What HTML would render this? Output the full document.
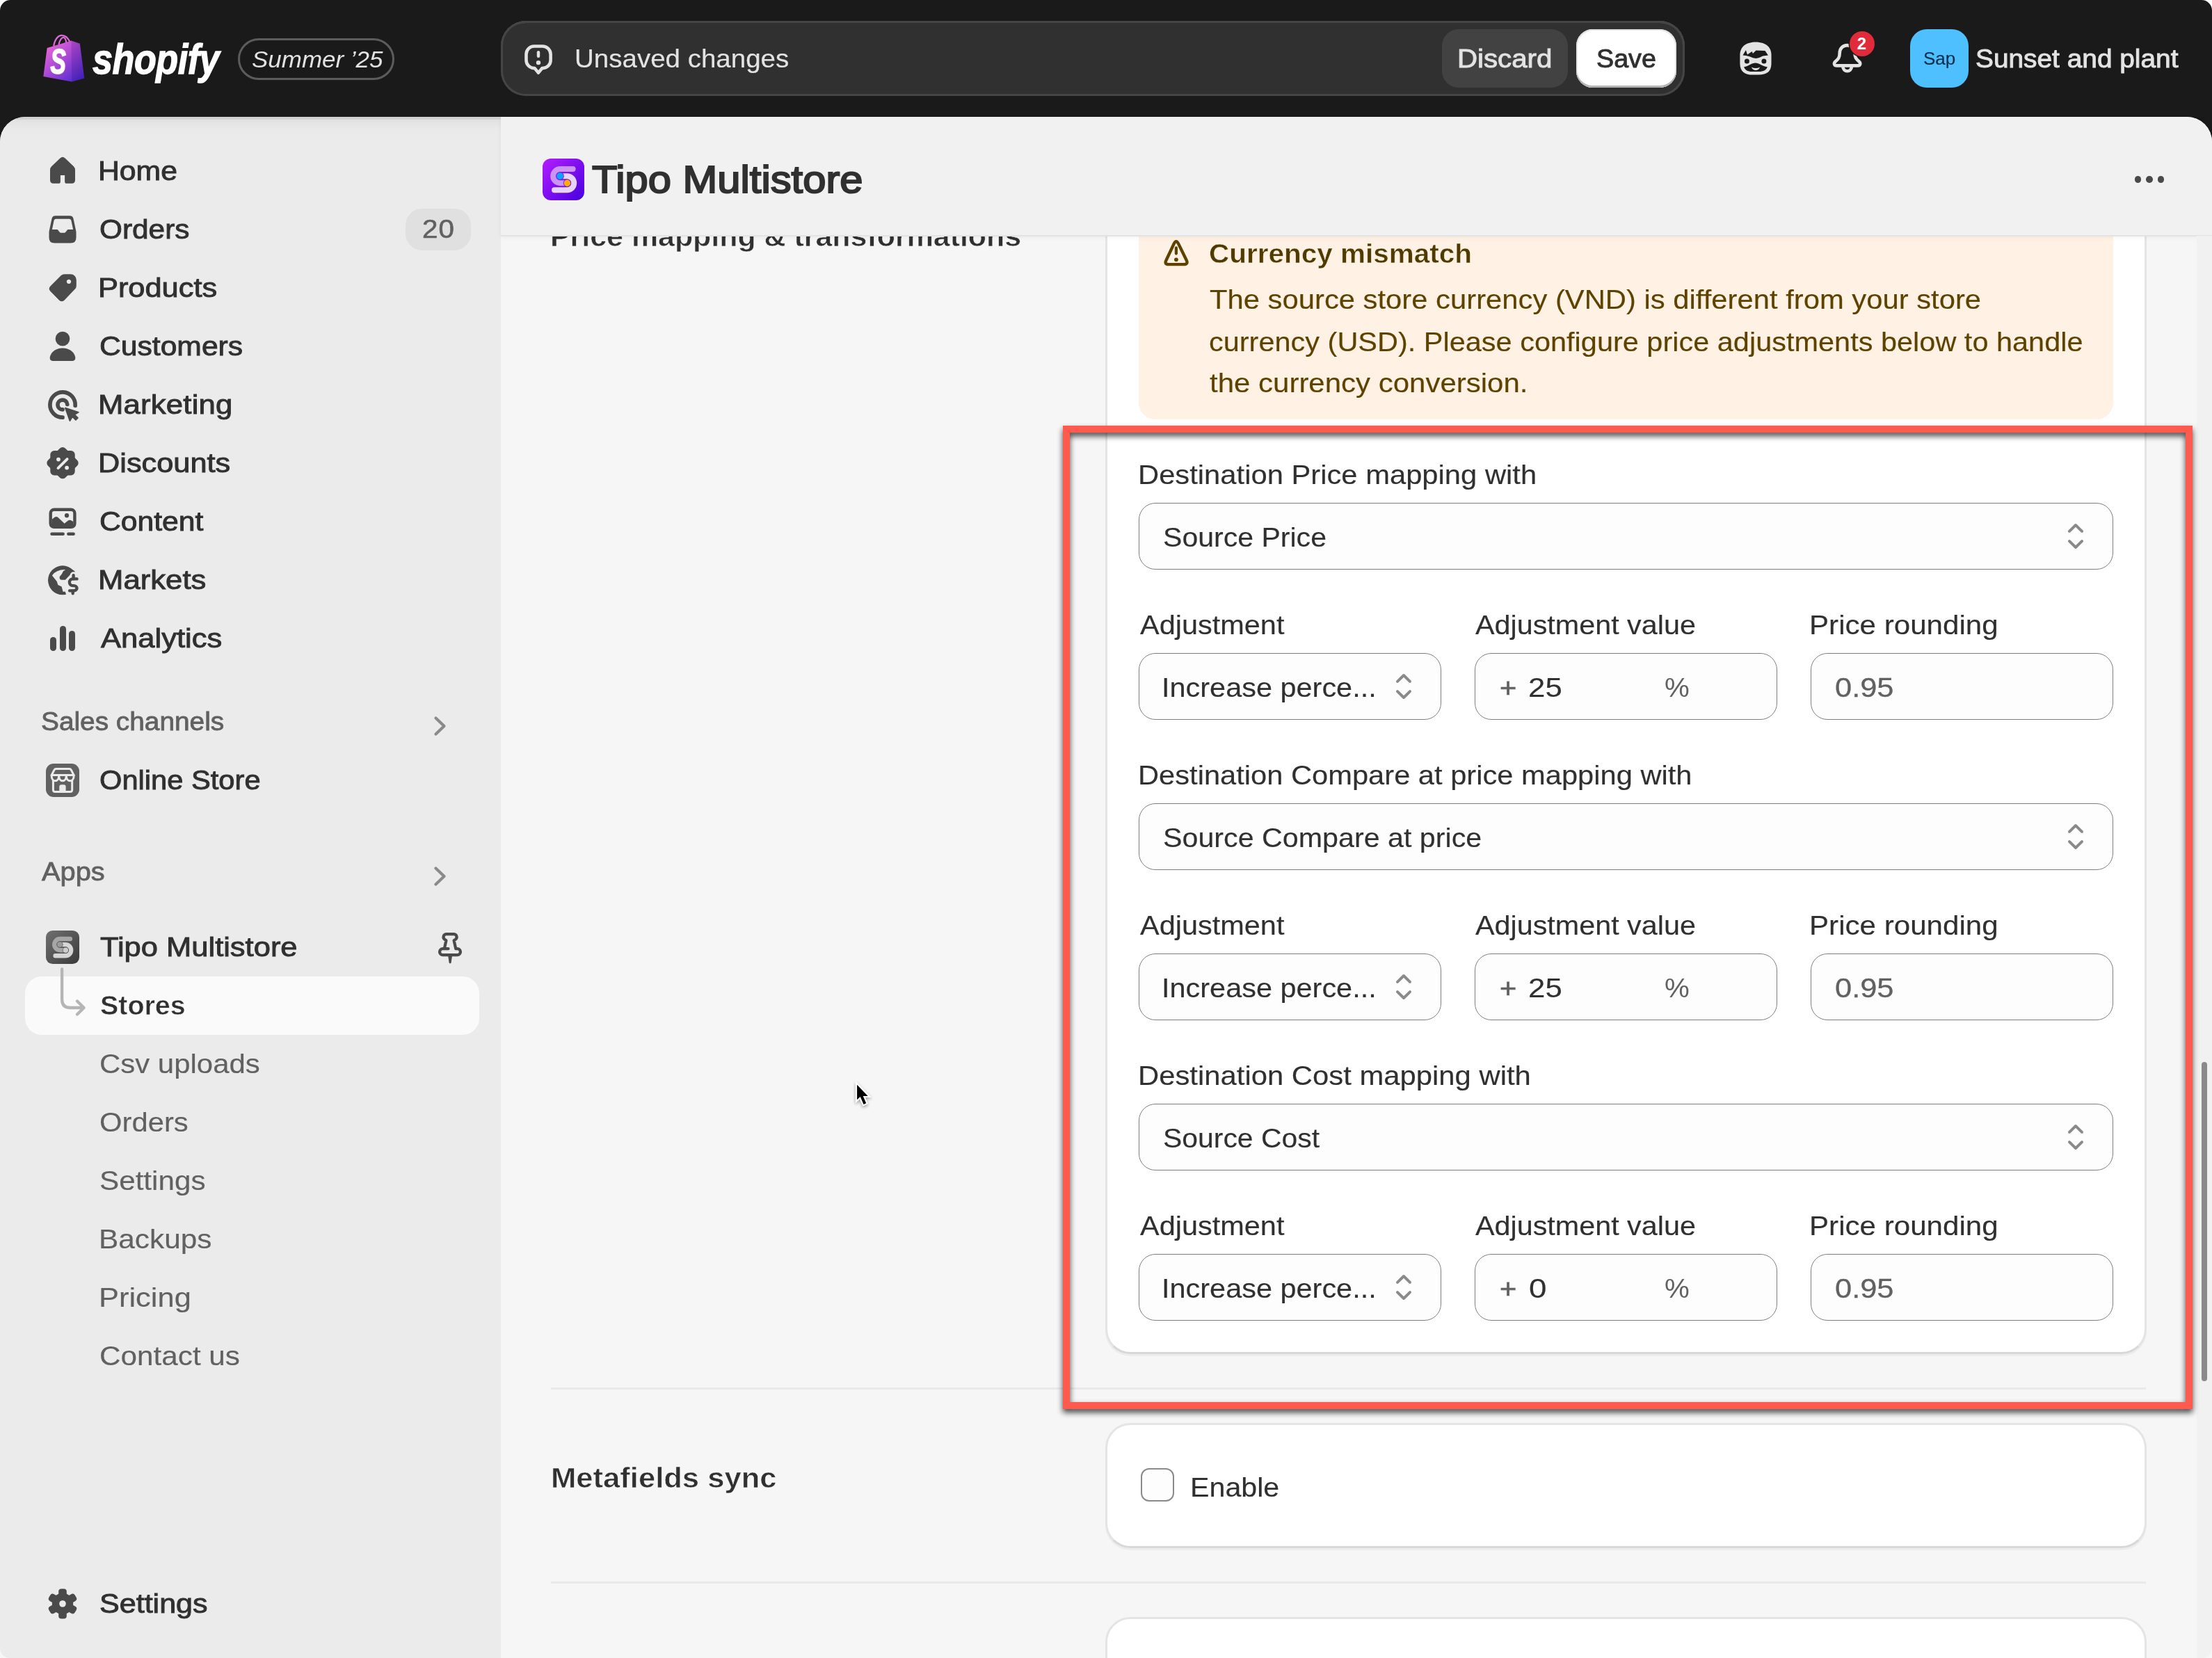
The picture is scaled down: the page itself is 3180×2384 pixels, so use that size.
<!DOCTYPE html>
<html><head><meta charset="utf-8"><title>Tipo Multistore</title>
<style>
html,body{margin:0;padding:0;}
body{width:3180px;height:2384px;position:relative;overflow:hidden;background:#fff;font-family:"Liberation Sans",sans-serif;}
.a{position:absolute;box-sizing:border-box;}
.t{position:absolute;white-space:pre;line-height:1;font-kerning:normal;transform-origin:0 50%;}
svg{position:absolute;overflow:visible;}
</style></head><body>
<div class="a" style="left:0px;top:0px;width:3180px;height:2384px;background:#1a1a1a;border-radius:15px 15px 0 0;"></div>
<div class="a" style="left:0px;top:168px;width:3180px;height:2216px;background:#f1f1f1;border-radius:36px 36px 0 0;overflow:hidden;"></div>
<div class="a" style="left:0px;top:168px;width:720px;height:2216px;background:#ebebeb;border-radius:36px 0 0 14px;"></div>
<div class="a" style="left:0px;top:168px;width:3180px;height:24px;border-radius:36px 36px 0 0;background:linear-gradient(to bottom, rgba(0,0,0,0.10) 0px, rgba(0,0,0,0.12) 3px, rgba(0,0,0,0.045) 4.5px, rgba(0,0,0,0.02) 12px, rgba(0,0,0,0) 22px);"></div>
<div class="a" style="left:36px;top:1404px;width:653px;height:84px;background:#fafafa;border-radius:24px;"></div>
<div class="a" style="left:342px;top:55px;width:225px;height:60px;border:3px solid #5c5c5c;border-radius:30px;"></div>
<div class="t" style="left:362.27px;top:69.07px;font-size:33px;color:#e3e3e3;letter-spacing:0.000px;transform:scaleX(1.0597);font-style:italic;">Summer ’25</div>
<div class="a" style="left:720px;top:30px;width:1702px;height:108px;background:#303030;border-radius:36px;box-shadow:inset 0 0 0 3px #454545, inset 0 3px 0 0 #5a5a5a;"></div>
<div class="t" style="left:826.28px;top:66.53px;font-size:36px;color:#e3e3e3;letter-spacing:0.000px;transform:scaleX(1.0695);-webkit-text-stroke:0.15px #e3e3e3;">Unsaved changes</div>
<div class="a" style="left:2073px;top:42px;width:181px;height:84px;background:#424242;border-radius:24px;"></div>
<div class="t" style="left:2094.98px;top:66.53px;font-size:36px;color:#e3e3e3;letter-spacing:0.000px;transform:scaleX(1.1174);-webkit-text-stroke:0.9px #e3e3e3;">Discard</div>
<div class="a" style="left:2266px;top:42px;width:144px;height:84px;background:#fff;border-radius:24px;box-shadow:inset 0 -3px 0 0 #b5b5b5, inset 0 0 0 2px #e3e3e3;"></div>
<div class="t" style="left:2294.53px;top:66.53px;font-size:36px;color:#303030;letter-spacing:0.000px;transform:scaleX(1.0472);-webkit-text-stroke:0.9px #303030;">Save</div>
<div class="a" style="left:2746px;top:42px;width:84px;height:84px;background:#4fc0ff;border-radius:24px;"></div>
<div class="t" style="left:2764.75px;top:71.84px;font-size:25px;color:#0a2d4a;letter-spacing:0.000px;transform:scaleX(1.0407);-webkit-text-stroke:0.15px #0a2d4a;">Sap</div>
<div class="t" style="left:2839.96px;top:66.53px;font-size:36px;color:#e3e3e3;letter-spacing:0.000px;transform:scaleX(1.0787);-webkit-text-stroke:0.9px #e3e3e3;">Sunset and plant</div>
<svg style="left:55px;top:45px;" width="80" height="80" viewBox="55 45 80 80">
<defs><linearGradient id="sg" x1="0.1" y1="0.05" x2="0.9" y2="0.95"><stop offset="0" stop-color="#ee6ad6"/><stop offset="0.5" stop-color="#a447d6"/><stop offset="1" stop-color="#4a28cc"/></linearGradient></defs>
<path d="M77.2 66 C79 56 84 50.5 89 50.8 C94 51 98 55 100.4 60" fill="none" stroke="#e06ad8" stroke-width="2.2"/>
<path d="M84.5 64 C86 57 89 53.5 91.5 54 C94 54.5 95 58 95.3 62" fill="none" stroke="#e06ad8" stroke-width="2.2"/>
<polygon points="67.7,68.9 102.5,58.4 114.8,62.8 121.3,112.4 103.2,117.5 62.3,110" fill="url(#sg)"/>
<polygon points="102.5,58.4 114.8,62.8 121.3,112.4 103.2,117.5" fill="rgba(40,0,90,0.16)"/>
<text x="72.2" y="105.6" font-family="Liberation Sans" font-weight="700" font-style="italic" font-size="49" fill="#fff" stroke="#fff" stroke-width="1.6" transform="translate(73.2 0) scale(0.68 1) translate(-73.2 0)">S</text>
</svg>
<div class="t" style="left:133.2px;top:53.5px;font-size:62px;font-weight:700;font-style:italic;color:#fff;letter-spacing:-0.6px;-webkit-text-stroke:1.4px #fff;transform:scaleX(0.842);transform-origin:0 0;">shopify</div>
<svg style="left:750px;top:60px;" width="50" height="50" viewBox="750 60 50 50"><path d="M768 66.5 H780 A11.6 11.6 0 0 1 791.6 78 V86.5 A11.6 11.6 0 0 1 780 98.1 L779.3 98.1 L774 104.6 L768.7 98.1 H768 A11.6 11.6 0 0 1 756.5 86.5 V78 A11.6 11.6 0 0 1 768 66.5 Z" fill="none" stroke="#e3e3e3" stroke-width="4.6" stroke-linejoin="round"/>
<path d="M774 75.2 V80.8" stroke="#e3e3e3" stroke-width="4.4" stroke-linecap="round"/><circle cx="774" cy="90.1" r="3.2" fill="#e3e3e3"/></svg>
<svg style="left:2495px;top:55px;" width="60" height="60" viewBox="2495 55 60 60"><path d="M2524 60.4 C2537 60.4 2546.5 66.5 2546.5 79 V91 C2546.5 103 2540 107.6 2528 107.6 H2520 C2508 107.6 2501.4 103 2501.4 91 V79 C2501.4 66.5 2511 60.4 2524 60.4 Z" fill="#e3e3e3"/>
<polygon points="2505.5,79.4 2509.9,72.1 2512.0,78.5 2518.8,73.9 2519.9,76.9 2524.5,72.6 2537.5,73.1 2541.9,79.4 2534.3,80.6 2528.9,82.9 2524.5,84.0 2520.2,83.2 2515.3,81.3 2510.4,79.9" fill="#1a1a1a"/>
<circle cx="2511.4" cy="87.9" r="3.5" fill="#1a1a1a"/><circle cx="2535.9" cy="87.9" r="3.5" fill="#1a1a1a"/>
<path d="M2507.1 96.2 C2514 95.5 2518 90.6 2523.6 90.6 C2529 90.6 2533 95.5 2540.8 96.2 C2538 103.5 2531 103 2523.6 103 C2516 103 2510 103.5 2507.1 96.2 Z" fill="#1a1a1a"/>
<path d="M2517.8 96.4 Q2524 99.5 2530.2 96.4 Q2528 101 2524 101 Q2520 101 2517.8 96.4 Z" fill="#e3e3e3"/></svg>
<svg style="left:2630px;top:40px;" width="70" height="70" viewBox="2630 40 70 70"><path d="M2655.6 65.1 C2649 65.1 2644.7 70 2644.7 76.5 C2644.7 83 2642.5 85 2638.8 88.3 C2635.5 91.2 2637 94.4 2640.5 94.4 H2670.7 C2674.2 94.4 2675.7 91.2 2672.4 88.3 C2668.7 85 2666.5 83 2666.5 76.5 C2666.5 70 2662.2 65.1 2655.6 65.1 Z" fill="none" stroke="#e3e3e3" stroke-width="4.6" stroke-linejoin="round"/>
<path d="M2649.3 96 A6.4 7.2 0 0 0 2662 96" fill="none" stroke="#e3e3e3" stroke-width="4.6"/>
<circle cx="2677" cy="63" r="19.5" fill="#1a1a1a"/><circle cx="2677" cy="63" r="18" fill="#e22b3a"/></svg>
<div class="t" style="left:2669.75px;top:50.68px;font-size:24px;color:#fff;letter-spacing:0.000px;font-weight:700;">2</div>
<svg style="left:60px;top:215px;" width="60" height="60" viewBox="0 0 20 20"><path fill="#4a4a4a" d="M8.9 4.1 Q10 3.1 11.1 4.1 L15.3 8.1 Q16 8.8 16 9.8 V14.6 Q16 16.27 14.4 16.27 H12 Q11.04 16.27 11.04 15.3 V12.3 H8.97 V15.3 Q8.97 16.27 8 16.27 H5.6 Q4 16.27 4 14.6 V9.8 Q4 8.8 4.7 8.1 Z"/></svg>
<svg style="left:60px;top:300px;" width="60" height="60" viewBox="0 0 20 20"><path fill="#4a4a4a" fill-rule="evenodd" d="M6.6 3.43 H13.4 Q14.9 3.43 15.2 4.9 L16.4 10.6 Q16.5 11 16.5 11.5 V13.9 Q16.5 16.47 13.9 16.47 H6.1 Q3.5 16.47 3.5 13.9 V11.5 Q3.5 11 3.6 10.6 L4.8 4.9 Q5.1 3.43 6.6 3.43 Z M6.9 4.9 Q6 4.9 5.83 5.8 L4.96 10.03 H7.3 Q7.7 10.03 7.9 10.4 L8.5 11.2 Q8.8 11.6 9.2 11.6 H10.8 Q11.2 11.6 11.5 11.2 L12.1 10.4 Q12.3 10.03 12.7 10.03 H15.04 L14.17 5.8 Q14 4.9 13.1 4.9 Z"/></svg>
<svg style="left:60px;top:384px;" width="60" height="60" viewBox="0 0 20 20"><path fill="#4a4a4a" fill-rule="evenodd" d="M10.9 3.43 H13.9 A2.7 2.7 0 0 1 16.6 6.13 V8.9 Q16.6 9.9 15.9 10.6 L10.9 15.8 Q9.6 17.1 8.3 15.8 L4.2 11.7 Q2.9 10.4 4.2 9.1 L9.2 4.1 Q9.9 3.43 10.9 3.43 Z M13 5.9 a1.07 1.07 0 1 0 0.001 0 Z"/></svg>
<svg style="left:60px;top:468px;" width="60" height="60" viewBox="0 0 20 20"><circle cx="10" cy="6.37" r="3.45" fill="#4a4a4a"/><path fill="#4a4a4a" d="M3.9 15.6 C3.9 13.5 6.3 10.86 10 10.86 C13.7 10.86 16.1 13.5 16.1 15.6 Q16.1 16.97 14.8 16.97 H5.2 Q3.9 16.97 3.9 15.6 Z"/></svg>
<svg style="left:60px;top:551.5px;" width="60" height="60" viewBox="0 0 20 20"><path d="M16.05 10.4 A6.05 6.05 0 1 0 10 16.05" fill="none" stroke="#4a4a4a" stroke-width="1.9" stroke-linecap="round"/><path d="M12.25 9.8 A2.3 2.3 0 1 0 10 12.3" fill="none" stroke="#4a4a4a" stroke-width="1.9" stroke-linecap="round"/><path d="M11.3 11.5 L17.6 13.6 L15.7 14.7 L17.3 16.3 L16.3 17.3 L14.7 15.7 L13.5 17.7 Z" fill="#4a4a4a" stroke="#4a4a4a" stroke-width="0.6" stroke-linejoin="round"/></svg>
<svg style="left:60px;top:636px;" width="60" height="60" viewBox="0 0 20 20"><g fill="#4a4a4a"><rect x="4.1" y="4.0" width="11.8" height="11.8" rx="1.9"/><rect x="4.1" y="4.0" width="11.8" height="11.8" rx="1.9" transform="rotate(45 10 9.9)"/></g><circle cx="8" cy="8.2" r="0.97" fill="#ebebeb"/><circle cx="12.03" cy="12.2" r="0.97" fill="#ebebeb"/><path d="M7.85 12.35 L12.2 8.05" stroke="#ebebeb" stroke-width="1.3" stroke-linecap="round"/></svg>
<svg style="left:60px;top:719.5px;" width="60" height="60" viewBox="0 0 20 20"><rect x="4.23" y="4.27" width="11.57" height="8.35" rx="1.7" fill="none" stroke="#4a4a4a" stroke-width="1.46"/><path fill="#4a4a4a" d="M4.9 8.9 L6.2 7.9 Q7.1 7.3 7.9 8.1 L10.9 10.9 L12.5 9.6 Q13.4 9 14.2 9.5 L15.1 10 V12.7 H4.9 Z"/><circle cx="12" cy="7.07" r="1.03" fill="#4a4a4a"/><path d="M4.85 15.9 H10.2 M12.8 15.9 H15.2" stroke="#4a4a4a" stroke-width="1.55" stroke-linecap="round"/></svg>
<svg style="left:60px;top:803.5px;" width="60" height="60" viewBox="0 0 20 20"><circle cx="10" cy="10.1" r="7" fill="#4a4a4a"/>
<path fill="#ebebeb" d="M4.96 7.86 Q7 4.8 11.78 5.03 L14.5 5.6 L17.5 9 V17.5 H11.78 L11.3 15.58 H10.17 L10 14.93 L9.53 13.17 L7.76 12.36 L7.28 10.75 L6.31 9.47 Z"/>
<path fill="#4a4a4a" stroke="#4a4a4a" stroke-width="0.5" stroke-linejoin="round" d="M11.78 5.03 L10.5 5.93 L9.85 7.22 L8.82 8.5 Q8.6 9.63 9.6 9.63 H11.2 L13.4 7.3 L15.6 5.9 L13 4.6 Z"/>
<g fill="none" stroke="#ebebeb" stroke-width="3.3" stroke-linecap="round"><path d="M16.85 9.47 H14.85 a1.55 1.62 0 0 0 0 3.24 h0.45 a1.55 1.2 0 0 1 0 2.4 H13.35"/><path d="M15.2 7.75 V16.45"/></g>
<g fill="none" stroke="#4a4a4a" stroke-width="1.45" stroke-linecap="round"><path d="M16.85 9.47 H14.85 a1.55 1.62 0 0 0 0 3.24 h0.45 a1.55 1.2 0 0 1 0 2.4 H13.35"/><path d="M15.2 7.75 V9.4 M14.9 15.2 V16.45"/></g></svg>
<div class="a" style="left:72px;top:916px;width:9px;height:20.200000000000045px;background:#4a4a4a;border-radius:4.5px;"></div>
<div class="a" style="left:85.5px;top:899.6px;width:9px;height:36.60000000000002px;background:#4a4a4a;border-radius:4.5px;"></div>
<div class="a" style="left:99px;top:907.2px;width:9px;height:29.0px;background:#4a4a4a;border-radius:4.5px;"></div>
<svg style="left:615px;top:1024px;" width="40" height="40" viewBox="615 1024 40 40"><path d="M626.5 1032.5 L638.5 1044 L626.5 1055.5" fill="none" stroke="#8a8a8a" stroke-width="4.2" stroke-linecap="round" stroke-linejoin="round"/></svg>
<svg style="left:615px;top:1239.7px;" width="40" height="40" viewBox="615 1239.7 40 40"><path d="M626.5 1248.2 L638.5 1259.7 L626.5 1271.2" fill="none" stroke="#8a8a8a" stroke-width="4.2" stroke-linecap="round" stroke-linejoin="round"/></svg>
<svg style="left:66px;top:1098px;" width="48" height="48" viewBox="0 0 48 48"><rect width="48" height="48" rx="11" fill="#616161"/>
<g fill="none" stroke="#ebebeb" stroke-width="3" stroke-linejoin="round" stroke-linecap="round">
<path d="M14.6 7.5 H33.7 Q35.5 7.5 36.3 9.1 L40.2 16.6 H8.1 L12 9.1 Q12.8 7.5 14.6 7.5 Z"/>
<path d="M8.1 16.7 C8.1 27.5 18.7 27.5 18.7 16.7 C18.7 27.5 29.3 27.5 29.3 16.7 C29.3 27.5 40.2 27.5 40.2 16.7"/>
<path d="M10.4 24.5 V37.6 Q10.4 40.6 13.4 40.6 H34.7 Q37.7 40.6 37.7 37.6 V24.5"/>
</g><path d="M19.3 40.6 V33.3 a3 3 0 0 1 3 -3 h3.3 a3 3 0 0 1 3 3 V40.6 Z" fill="#ebebeb"/></svg>
<svg style="left:66px;top:1338px;" width="48" height="48" viewBox="0 0 60 60"><defs><linearGradient id="tg1" x1="0" y1="0" x2="1" y2="1"><stop offset="0" stop-color="#707070"/><stop offset="1" stop-color="#3a3a3a"/></linearGradient></defs>
<rect width="60" height="60" rx="12" fill="url(#tg1)"/>
<path d="M43.6 15.05 H25.3 A10.1 10.1 0 0 0 25.3 35.25 H35.4" fill="none" stroke="#a6a6a6" stroke-width="8" stroke-linecap="round"/>
<path d="M25.2 25.15 H35.1 A10.1 10.1 0 0 1 35.1 45.35 H17" fill="none" stroke="#d6d6d6" stroke-width="8" stroke-linecap="round"/>
<circle cx="25.1" cy="25.15" r="5.7" fill="#5a5a5a"/><circle cx="25.1" cy="25.15" r="4.8" fill="#9c9c9c"/>
<circle cx="35.4" cy="35.3" r="5.6" fill="#5a5a5a"/><circle cx="35.4" cy="35.3" r="4.7" fill="#cdcdcd"/></svg>
<svg style="left:80px;top:1385px;" width="50" height="80" viewBox="80 1385 50 80"><path d="M89.1 1393.5 V1437.3 Q89.1 1449 101 1449 H120 M111 1439.5 L120.6 1449 L111 1458.5" fill="none" stroke="#b5b5b5" stroke-width="4.3" stroke-linecap="round" stroke-linejoin="round"/></svg>
<svg style="left:620px;top:1330px;" width="60" height="60" viewBox="620 1330 60 60"><path d="M641.5 1343.1 H652.6 A4.3 4.3 0 0 1 654.6 1351 L652.6 1352.3 L655.3 1364.2 H657.5 A4.45 4.45 0 0 1 657.5 1373.1 H636.5 A4.45 4.45 0 0 1 636.5 1364.2 H644.5 M638.8 1364.2 L641.4 1352.3 L639.5 1351 A4.3 4.3 0 0 1 641.5 1343.1" fill="none" stroke="#4a4a4a" stroke-width="4.2" stroke-linecap="round" stroke-linejoin="round"/>
<path d="M644 1373 H650.2 L648.6 1384.3 Q647.1 1386.6 645.6 1384.3 Z" fill="#4a4a4a"/></svg>
<svg style="left:60px;top:2276px;" width="60" height="60" viewBox="-30 -30 60 60"><g fill="#4a4a4a"><circle r="15.2"/><rect x="-5.8" y="-21.6" width="11.6" height="43.2" rx="4"/><rect x="-5.8" y="-21.6" width="11.6" height="43.2" rx="4" transform="rotate(60)"/><rect x="-5.8" y="-21.6" width="11.6" height="43.2" rx="4" transform="rotate(120)"/></g><circle r="4.8" fill="#ebebeb"/></svg>
<div class="t" style="left:141.28px;top:226.49px;font-size:39px;color:#303030;letter-spacing:0.000px;transform:scaleX(1.0952);-webkit-text-stroke:0.9px #303030;">Home</div>
<div class="t" style="left:142.81px;top:310.49px;font-size:39px;color:#303030;letter-spacing:0.000px;transform:scaleX(1.0859);-webkit-text-stroke:0.9px #303030;">Orders</div>
<div class="t" style="left:141.22px;top:394.49px;font-size:39px;color:#303030;letter-spacing:0.000px;transform:scaleX(1.1120);-webkit-text-stroke:0.9px #303030;">Products</div>
<div class="t" style="left:142.66px;top:478.49px;font-size:39px;color:#303030;letter-spacing:-0.000px;transform:scaleX(1.0931);-webkit-text-stroke:0.9px #303030;">Customers</div>
<div class="t" style="left:141.20px;top:562.49px;font-size:39px;color:#303030;letter-spacing:0.179px;transform:scaleX(1.1200);-webkit-text-stroke:0.9px #303030;">Marketing</div>
<div class="t" style="left:141.23px;top:646.49px;font-size:39px;color:#303030;letter-spacing:0.000px;transform:scaleX(1.1112);-webkit-text-stroke:0.9px #303030;">Discounts</div>
<div class="t" style="left:142.66px;top:730.49px;font-size:39px;color:#303030;letter-spacing:0.000px;transform:scaleX(1.0937);-webkit-text-stroke:0.9px #303030;">Content</div>
<div class="t" style="left:141.20px;top:814.49px;font-size:39px;color:#303030;letter-spacing:0.006px;transform:scaleX(1.1200);-webkit-text-stroke:0.9px #303030;">Markets</div>
<div class="t" style="left:144.70px;top:898.49px;font-size:39px;color:#303030;letter-spacing:0.000px;transform:scaleX(1.1162);-webkit-text-stroke:0.9px #303030;">Analytics</div>
<div class="t" style="left:142.85px;top:1102.49px;font-size:39px;color:#303030;letter-spacing:0.000px;transform:scaleX(1.0681);-webkit-text-stroke:0.9px #303030;">Online Store</div>
<div class="t" style="left:143.72px;top:1341.99px;font-size:39px;color:#303030;letter-spacing:0.000px;transform:scaleX(1.1150);-webkit-text-stroke:0.9px #303030;">Tipo Multistore</div>
<div class="t" style="left:142.77px;top:2286.49px;font-size:39px;color:#303030;letter-spacing:0.000px;transform:scaleX(1.1042);-webkit-text-stroke:0.9px #303030;">Settings</div>
<div class="a" style="left:583px;top:300px;width:94px;height:60px;background:#e0e0e0;border-radius:24px;"></div>
<div class="t" style="left:606.90px;top:312.43px;font-size:36px;color:#616161;letter-spacing:1.071px;transform:scaleX(1.1200);-webkit-text-stroke:0.6px #616161;">20</div>
<div class="t" style="left:58.72px;top:1020.23px;font-size:36px;color:#616161;letter-spacing:0.000px;transform:scaleX(1.0781);-webkit-text-stroke:0.8px #616161;">Sales channels</div>
<div class="t" style="left:60.46px;top:1236.23px;font-size:36px;color:#616161;letter-spacing:0.000px;transform:scaleX(1.1046);-webkit-text-stroke:0.8px #616161;">Apps</div>
<div class="t" style="left:143.81px;top:1425.99px;font-size:39px;color:#303030;letter-spacing:0.000px;transform:scaleX(1.0106);font-weight:700;-webkit-text-stroke:0.5px #fafafa;">Stores</div>
<div class="t" style="left:143.10px;top:1510.49px;font-size:39px;color:#616161;letter-spacing:0.000px;transform:scaleX(1.0753);-webkit-text-stroke:0.15px #616161;">Csv uploads</div>
<div class="t" style="left:143.24px;top:1594.49px;font-size:39px;color:#616161;letter-spacing:0.000px;transform:scaleX(1.0713);-webkit-text-stroke:0.15px #616161;">Orders</div>
<div class="t" style="left:143.22px;top:1678.49px;font-size:39px;color:#616161;letter-spacing:0.000px;transform:scaleX(1.0824);-webkit-text-stroke:0.15px #616161;">Settings</div>
<div class="t" style="left:141.72px;top:1762.49px;font-size:39px;color:#616161;letter-spacing:0.000px;transform:scaleX(1.0860);-webkit-text-stroke:0.15px #616161;">Backups</div>
<div class="t" style="left:141.63px;top:1846.49px;font-size:39px;color:#616161;letter-spacing:0.000px;transform:scaleX(1.1142);-webkit-text-stroke:0.15px #616161;">Pricing</div>
<div class="t" style="left:143.09px;top:1930.49px;font-size:39px;color:#616161;letter-spacing:0.000px;transform:scaleX(1.0834);-webkit-text-stroke:0.15px #616161;">Contact us</div>
<div class="a" style="left:720px;top:338px;width:2460px;height:2046px;background:#f6f6f6;"></div>
<div class="t" style="left:791.14px;top:320.29px;font-size:41px;color:#303030;letter-spacing:0.000px;transform:scaleX(1.0466);font-weight:700;-webkit-text-stroke:0.6px #f6f6f6;">Price mapping &amp; transformations</div>
<div class="a" style="left:1589px;top:300px;width:1497px;height:1647px;background:#fff;border:3px solid #e4e4e4;border-bottom-color:#d8d8d8;border-radius:36px;box-shadow:0 3px 0 0 #ececec;"></div>
<div class="a" style="left:1637px;top:300px;width:1401px;height:302.5px;background:#fff1e3;border-radius:24px;"></div>
<svg style="left:1665px;top:338px;" width="52" height="50" viewBox="1665 338 52 50"><path d="M1676.6 374 L1687.6 350.6 Q1690.9 343.6 1694.2 350.6 L1705.6 374 Q1708.6 380.1 1701.8 380.1 H1680.2 Q1673.4 380.1 1676.6 374 Z" fill="none" stroke="#5e4200" stroke-width="4.4" stroke-linejoin="round"/><path d="M1690.9 356.4 V364.6" stroke="#5e4200" stroke-width="4.2" stroke-linecap="round"/><circle cx="1690.9" cy="373.3" r="2.9" fill="#5e4200"/></svg>
<div class="t" style="left:1737.88px;top:344.99px;font-size:39px;color:#4f3a00;letter-spacing:0.000px;transform:scaleX(1.0381);font-weight:700;-webkit-text-stroke:0.5px #fff1e3;">Currency mismatch</div>
<div class="t" style="left:1738.68px;top:411.29px;font-size:39px;color:#5e4200;letter-spacing:0.000px;transform:scaleX(1.0713);-webkit-text-stroke:0.15px #5e4200;">The source store currency (VND) is different from your store</div>
<div class="t" style="left:1737.89px;top:471.99px;font-size:39px;color:#5e4200;letter-spacing:0.000px;transform:scaleX(1.0636);-webkit-text-stroke:0.15px #5e4200;">currency (USD). Please configure price adjustments below to handle</div>
<div class="t" style="left:1739.08px;top:531.29px;font-size:39px;color:#5e4200;letter-spacing:0.000px;transform:scaleX(1.0768);-webkit-text-stroke:0.15px #5e4200;">the currency conversion.</div>
<div class="t" style="left:1635.97px;top:662.99px;font-size:39px;color:#303030;letter-spacing:0.000px;transform:scaleX(1.0704);-webkit-text-stroke:0.15px #303030;">Destination Price mapping with</div>
<div class="a" style="left:1637px;top:723px;width:1401px;height:96px;background:#fdfdfd;border:1px solid #7f7f7f;border-radius:24px;"></div>
<div class="t" style="left:1671.78px;top:752.99px;font-size:39px;color:#303030;letter-spacing:0.000px;transform:scaleX(1.0524);-webkit-text-stroke:0.15px #303030;">Source Price</div>
<svg style="left:2968.5px;top:750px" width="30" height="42" viewBox="0 0 30 42"><path d="M6 13.9 L15 5 L24 13.9 M6 28.1 L15 37 L24 28.1" fill="none" stroke="#8a8a8a" stroke-width="4" stroke-linecap="round" stroke-linejoin="round"/></svg>
<div class="t" style="left:1638.62px;top:878.99px;font-size:39px;color:#303030;letter-spacing:0.000px;transform:scaleX(1.0632);-webkit-text-stroke:0.15px #303030;">Adjustment</div>
<div class="t" style="left:2120.82px;top:878.99px;font-size:39px;color:#303030;letter-spacing:0.000px;transform:scaleX(1.0592);-webkit-text-stroke:0.15px #303030;">Adjustment value</div>
<div class="t" style="left:2600.54px;top:878.99px;font-size:39px;color:#303030;letter-spacing:-0.000px;transform:scaleX(1.0802);-webkit-text-stroke:0.15px #303030;">Price rounding</div>
<div class="a" style="left:1637px;top:939px;width:435px;height:96px;background:#fdfdfd;border:1px solid #7f7f7f;border-radius:24px;"></div>
<div class="a" style="left:2120px;top:939px;width:435px;height:96px;background:#fdfdfd;border:1px solid #7f7f7f;border-radius:24px;"></div>
<div class="a" style="left:2603px;top:939px;width:435px;height:96px;background:#fdfdfd;border:1px solid #7f7f7f;border-radius:24px;"></div>
<div class="t" style="left:1669.90px;top:968.99px;font-size:39px;color:#303030;letter-spacing:0.000px;transform:scaleX(1.0628);-webkit-text-stroke:0.15px #303030;">Increase perce...</div>
<svg style="left:2002.8px;top:966px" width="30" height="42" viewBox="0 0 30 42"><path d="M6 13.9 L15 5 L24 13.9 M6 28.1 L15 37 L24 28.1" fill="none" stroke="#8a8a8a" stroke-width="4" stroke-linecap="round" stroke-linejoin="round"/></svg>
<div class="t" style="left:2155.93px;top:968.99px;font-size:39px;color:#616161;letter-spacing:0.000px;transform:scaleX(1.0632);-webkit-text-stroke:0.7px #616161;">+</div>
<div class="t" style="left:2197.02px;top:968.99px;font-size:39px;color:#303030;letter-spacing:0.268px;transform:scaleX(1.1200);-webkit-text-stroke:0.15px #303030;">25</div>
<div class="t" style="left:2392.58px;top:968.99px;font-size:39px;color:#616161;letter-spacing:0.000px;transform:scaleX(1.0312);">%</div>
<div class="t" style="left:2637.86px;top:968.99px;font-size:39px;color:#616161;letter-spacing:0.000px;transform:scaleX(1.1129);-webkit-text-stroke:0.3px #616161;">0.95</div>
<div class="t" style="left:1635.98px;top:1094.99px;font-size:39px;color:#303030;letter-spacing:0.000px;transform:scaleX(1.0681);-webkit-text-stroke:0.15px #303030;">Destination Compare at price mapping with</div>
<div class="a" style="left:1637px;top:1155px;width:1401px;height:96px;background:#fdfdfd;border:1px solid #7f7f7f;border-radius:24px;"></div>
<div class="t" style="left:1671.77px;top:1184.99px;font-size:39px;color:#303030;letter-spacing:0.000px;transform:scaleX(1.0569);-webkit-text-stroke:0.15px #303030;">Source Compare at price</div>
<svg style="left:2968.5px;top:1182px" width="30" height="42" viewBox="0 0 30 42"><path d="M6 13.9 L15 5 L24 13.9 M6 28.1 L15 37 L24 28.1" fill="none" stroke="#8a8a8a" stroke-width="4" stroke-linecap="round" stroke-linejoin="round"/></svg>
<div class="t" style="left:1638.62px;top:1310.99px;font-size:39px;color:#303030;letter-spacing:0.000px;transform:scaleX(1.0632);-webkit-text-stroke:0.15px #303030;">Adjustment</div>
<div class="t" style="left:2120.82px;top:1310.99px;font-size:39px;color:#303030;letter-spacing:0.000px;transform:scaleX(1.0592);-webkit-text-stroke:0.15px #303030;">Adjustment value</div>
<div class="t" style="left:2600.54px;top:1310.99px;font-size:39px;color:#303030;letter-spacing:-0.000px;transform:scaleX(1.0802);-webkit-text-stroke:0.15px #303030;">Price rounding</div>
<div class="a" style="left:1637px;top:1371px;width:435px;height:96px;background:#fdfdfd;border:1px solid #7f7f7f;border-radius:24px;"></div>
<div class="a" style="left:2120px;top:1371px;width:435px;height:96px;background:#fdfdfd;border:1px solid #7f7f7f;border-radius:24px;"></div>
<div class="a" style="left:2603px;top:1371px;width:435px;height:96px;background:#fdfdfd;border:1px solid #7f7f7f;border-radius:24px;"></div>
<div class="t" style="left:1669.90px;top:1400.99px;font-size:39px;color:#303030;letter-spacing:0.000px;transform:scaleX(1.0628);-webkit-text-stroke:0.15px #303030;">Increase perce...</div>
<svg style="left:2002.8px;top:1398px" width="30" height="42" viewBox="0 0 30 42"><path d="M6 13.9 L15 5 L24 13.9 M6 28.1 L15 37 L24 28.1" fill="none" stroke="#8a8a8a" stroke-width="4" stroke-linecap="round" stroke-linejoin="round"/></svg>
<div class="t" style="left:2155.93px;top:1400.99px;font-size:39px;color:#616161;letter-spacing:0.000px;transform:scaleX(1.0632);-webkit-text-stroke:0.7px #616161;">+</div>
<div class="t" style="left:2197.02px;top:1400.99px;font-size:39px;color:#303030;letter-spacing:0.268px;transform:scaleX(1.1200);-webkit-text-stroke:0.15px #303030;">25</div>
<div class="t" style="left:2392.58px;top:1400.99px;font-size:39px;color:#616161;letter-spacing:0.000px;transform:scaleX(1.0312);">%</div>
<div class="t" style="left:2637.86px;top:1400.99px;font-size:39px;color:#616161;letter-spacing:0.000px;transform:scaleX(1.1129);-webkit-text-stroke:0.3px #616161;">0.95</div>
<div class="t" style="left:1635.97px;top:1526.99px;font-size:39px;color:#303030;letter-spacing:0.000px;transform:scaleX(1.0722);-webkit-text-stroke:0.15px #303030;">Destination Cost mapping with</div>
<div class="a" style="left:1637px;top:1587px;width:1401px;height:96px;background:#fdfdfd;border:1px solid #7f7f7f;border-radius:24px;"></div>
<div class="t" style="left:1671.79px;top:1616.99px;font-size:39px;color:#303030;letter-spacing:0.000px;transform:scaleX(1.0488);-webkit-text-stroke:0.15px #303030;">Source Cost</div>
<svg style="left:2968.5px;top:1614px" width="30" height="42" viewBox="0 0 30 42"><path d="M6 13.9 L15 5 L24 13.9 M6 28.1 L15 37 L24 28.1" fill="none" stroke="#8a8a8a" stroke-width="4" stroke-linecap="round" stroke-linejoin="round"/></svg>
<div class="t" style="left:1638.62px;top:1742.99px;font-size:39px;color:#303030;letter-spacing:0.000px;transform:scaleX(1.0632);-webkit-text-stroke:0.15px #303030;">Adjustment</div>
<div class="t" style="left:2120.82px;top:1742.99px;font-size:39px;color:#303030;letter-spacing:0.000px;transform:scaleX(1.0592);-webkit-text-stroke:0.15px #303030;">Adjustment value</div>
<div class="t" style="left:2600.54px;top:1742.99px;font-size:39px;color:#303030;letter-spacing:-0.000px;transform:scaleX(1.0802);-webkit-text-stroke:0.15px #303030;">Price rounding</div>
<div class="a" style="left:1637px;top:1803px;width:435px;height:96px;background:#fdfdfd;border:1px solid #7f7f7f;border-radius:24px;"></div>
<div class="a" style="left:2120px;top:1803px;width:435px;height:96px;background:#fdfdfd;border:1px solid #7f7f7f;border-radius:24px;"></div>
<div class="a" style="left:2603px;top:1803px;width:435px;height:96px;background:#fdfdfd;border:1px solid #7f7f7f;border-radius:24px;"></div>
<div class="t" style="left:1669.90px;top:1832.99px;font-size:39px;color:#303030;letter-spacing:0.000px;transform:scaleX(1.0628);-webkit-text-stroke:0.15px #303030;">Increase perce...</div>
<svg style="left:2002.8px;top:1830px" width="30" height="42" viewBox="0 0 30 42"><path d="M6 13.9 L15 5 L24 13.9 M6 28.1 L15 37 L24 28.1" fill="none" stroke="#8a8a8a" stroke-width="4" stroke-linecap="round" stroke-linejoin="round"/></svg>
<div class="t" style="left:2155.93px;top:1832.99px;font-size:39px;color:#616161;letter-spacing:0.000px;transform:scaleX(1.0632);-webkit-text-stroke:0.7px #616161;">+</div>
<div class="t" style="left:2197.65px;top:1832.99px;font-size:39px;color:#303030;letter-spacing:0.000px;transform:scaleX(1.1733);-webkit-text-stroke:0.15px #303030;">0</div>
<div class="t" style="left:2392.58px;top:1832.99px;font-size:39px;color:#616161;letter-spacing:0.000px;transform:scaleX(1.0312);">%</div>
<div class="t" style="left:2637.86px;top:1832.99px;font-size:39px;color:#616161;letter-spacing:0.000px;transform:scaleX(1.1129);-webkit-text-stroke:0.3px #616161;">0.95</div>
<div class="a" style="left:792px;top:1995px;width:2293px;height:3px;background:#e9e9e9;"></div>
<div class="a" style="left:792px;top:2274px;width:2293px;height:3px;background:#e9e9e9;"></div>
<div class="t" style="left:791.59px;top:2104.99px;font-size:41px;color:#303030;letter-spacing:0.000px;transform:scaleX(1.0628);font-weight:700;-webkit-text-stroke:0.6px #f6f6f6;">Metafields sync</div>
<div class="a" style="left:1589px;top:2046px;width:1497px;height:180px;background:#fff;border:3px solid #e4e4e4;border-bottom-color:#d8d8d8;border-radius:36px;box-shadow:0 3px 0 0 #ececec;"></div>
<div class="a" style="left:1640px;top:2111px;width:48px;height:48px;background:#fdfdfd;border:2.5px solid #8a8a8a;border-radius:12px;"></div>
<div class="t" style="left:1711.32px;top:2119.39px;font-size:39px;color:#303030;letter-spacing:0.000px;transform:scaleX(1.0564);-webkit-text-stroke:0.15px #303030;">Enable</div>
<div class="a" style="left:1589px;top:2325px;width:1497px;height:200px;background:#fff;border:3px solid #e4e4e4;border-radius:36px;"></div>
<div class="a" style="left:720px;top:168px;width:2460px;height:170px;background:#f1f1f1;border-radius:0 36px 0 0;box-shadow:0 2px 0 0 #e3e3e3, 0 3px 6px rgba(0,0,0,0.06);"></div>
<div class="t" style="left:851.25px;top:229.90px;font-size:56px;color:#303030;letter-spacing:0.000px;transform:scaleX(1.0667);-webkit-text-stroke:2.1px #303030;">Tipo Multistore</div>
<svg style="left:780px;top:228px;" width="60" height="60" viewBox="0 0 60 60"><defs><linearGradient id="tg2" x1="0" y1="0" x2="1" y2="1"><stop offset="0" stop-color="#b51dff"/><stop offset="1" stop-color="#4600de"/></linearGradient></defs>
<rect width="60" height="60" rx="12" fill="url(#tg2)"/>
<path d="M43.6 15.05 H25.3 A10.1 10.1 0 0 0 25.3 35.25 H35.4" fill="none" stroke="#c993f8" stroke-width="8" stroke-linecap="round"/>
<path d="M25.2 25.15 H35.1 A10.1 10.1 0 0 1 35.1 45.35 H17" fill="none" stroke="#e6d4fb" stroke-width="8" stroke-linecap="round"/>
<circle cx="25.1" cy="25.15" r="5.7" fill="#8a14ee"/><circle cx="25.1" cy="25.15" r="4.8" fill="#0aa5ff"/>
<circle cx="35.4" cy="35.3" r="5.6" fill="#8a14ee"/><circle cx="35.4" cy="35.3" r="4.7" fill="#ffae00"/></svg>
<div class="a" style="left:3068.65px;top:253px;width:9.5px;height:9.5px;background:#4a4a4a;border-radius:50%;"></div>
<div class="a" style="left:3085.15px;top:253px;width:9.5px;height:9.5px;background:#4a4a4a;border-radius:50%;"></div>
<div class="a" style="left:3101.65px;top:253px;width:9.5px;height:9.5px;background:#4a4a4a;border-radius:50%;"></div>
<div class="a" style="left:3158px;top:339px;width:22px;height:2045px;background:#f1f1f1;"></div>
<div class="a" style="left:3165px;top:1526.5px;width:8px;height:459px;background:#8a8a8a;border-radius:4px;"></div>
<div class="a" style="left:1528px;top:612px;width:1624px;height:1414px;border:10px solid #fe5a4d;filter:drop-shadow(0px 5px 4px rgba(0,0,0,0.72));"></div>
<svg style="left:1220px;top:1550px;filter:drop-shadow(0px 2px 2px rgba(0,0,0,0.35));" width="40" height="50" viewBox="1220 1550 40 50"><polygon points="1232.1,1559.8 1247.7,1575.9 1240.7,1575.9 1245.2,1586.2 1241.6,1587.9 1236.7,1576.9 1232.1,1581.2" fill="#000" stroke="#fff" stroke-width="4.4" stroke-linejoin="miter" paint-order="stroke"/></svg>
<svg style="left:0px;top:2370px;" width="14" height="14" viewBox="0 0 14 14"><path d="M0 0 A14 14 0 0 0 14 14 H0 Z" fill="#f7f7f7"/></svg>
<svg style="left:3166px;top:2370px;" width="14" height="14" viewBox="0 0 14 14"><path d="M14 0 A14 14 0 0 1 0 14 H14 Z" fill="#f7f7f7"/></svg>
</body></html>
